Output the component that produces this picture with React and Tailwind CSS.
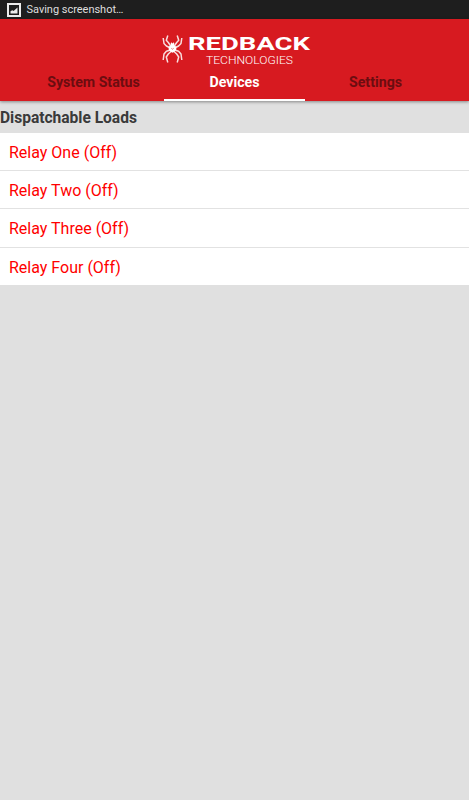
import clsx from 'clsx';

const tabs = ['System Status', 'Devices', 'Settings'];

const relays = [
  { id: 1, name: 'Relay One', on: false },
  { id: 2, name: 'Relay Two', on: false },
  { id: 3, name: 'Relay Three', on: false },
  { id: 4, name: 'Relay Four', on: false },
];

const StatusBar = () => (
  <div className="flex h-[19px] items-center bg-[#1e1e1e] pl-[7px]">
    <svg width="14" height="14" viewBox="0 0 14 14" className="shrink-0">
      <rect x="1" y="1" width="12" height="12" fill="none" stroke="#ececec" strokeWidth="2" />
      <path d="M3.5 10.5V8.2L5.3 7.2L6.6 8L10.5 4.4V10.5Z" fill="#ececec" />
    </svg>
    <span className="ml-[5.5px] text-[11px] leading-[19px] tracking-[-0.02px] text-[#dedede]">Saving screenshot…</span>
  </div>
);

const Logo = () => (
  <svg width="150" height="34" viewBox="0 0 150 34" className="block">
    {/* Spider */}
    <g fill="none" stroke="#fff" strokeWidth="1.5" strokeLinejoin="round" opacity="0.85">
      <path d="M9 14.5L6.3 10.5L4.3 8.2L5.8 3.5" />
      <path d="M12 14.5L14.7 10.5L16.7 8.2L15.2 3.5" />
      <path d="M8.5 16L4.4 14L2 11.5L1.2 6" />
      <path d="M12.5 16L16.6 14L19 11.5L19.8 6" />
      <path d="M8.5 18L4.4 19.2L2 22L1.2 28" />
      <path d="M12.5 18L16.6 19.2L19 22L19.8 28" />
      <path d="M9 19.5L6.3 22L4.3 25L5.8 30.5" />
      <path d="M12 19.5L14.7 22L16.7 25L15.2 30.5" />
    </g>
    <path d="M8.7 11.4L9.2 10.2L10.5 11.4L11.8 10.2L12.3 11.4L12.1 13.3L14.2 14.8L14.4 17.2L12.9 19.6L10.5 20.8L8.1 19.6L6.6 17.2L6.8 14.8L8.9 13.3Z" fill="#fff" />
    <path d="M9.3 16.3L10.5 17.2L11.7 16.3" stroke="#d71a20" strokeWidth="0.6" fill="none" />
    <text x="26" y="17.8" textLength="122" lengthAdjust="spacingAndGlyphs" fill="#fff" className="font-[Roboto] text-[19px] font-bold">
      REDBACK
    </text>
    <text x="44" y="31.6" textLength="87" lengthAdjust="spacingAndGlyphs" fill="#fff" className="font-[Roboto] text-[11px] font-light">
      TECHNOLOGIES
    </text>
  </svg>
);

const Header = ({ active }) => (
  <header className="relative z-10 flex h-[82px] flex-col bg-[#d71a20] pt-[13px] shadow-[0_1px_3px_rgba(0,0,0,0.4)]">
    <div className="ml-[162px]">
      <Logo />
    </div>
    <nav className="flex h-[35px] justify-center">
      {tabs.map((tab) => (
        <button
          key={tab}
          className={clsx(
            'box-content flex h-[33px] w-[141px] justify-center border-b-2 text-[14.2px] font-bold leading-[32px]',
            tab === active ? 'border-white text-white' : 'border-transparent text-[#6b0d10]'
          )}
        >
          {tab}
        </button>
      ))}
    </nav>
  </header>
);

const App = () => {
  return (
    <div className="flex h-screen flex-col overflow-hidden bg-[#e0e0e0] font-[Roboto,sans-serif]">
      <StatusBar />
      <Header active="Devices" />
      <h2 className="h-8 text-[15.6px] font-bold leading-[34px] tracking-[-0.03px] text-[#3a3a3a]">Dispatchable Loads</h2>
      <ul className="bg-white">
        {relays.map((relay) => (
          <li
            key={relay.id}
            className="h-[38.2px] border-b border-[#e2e2e2] pl-[9px] text-[16px] leading-[40.2px] text-[#ff0000] first:leading-[39px] last:h-[37.4px] last:border-b-0 last:leading-[39px]"
          >
            {relay.name} ({relay.on ? 'On' : 'Off'})
          </li>
        ))}
      </ul>
    </div>
  );
};

export default App;
